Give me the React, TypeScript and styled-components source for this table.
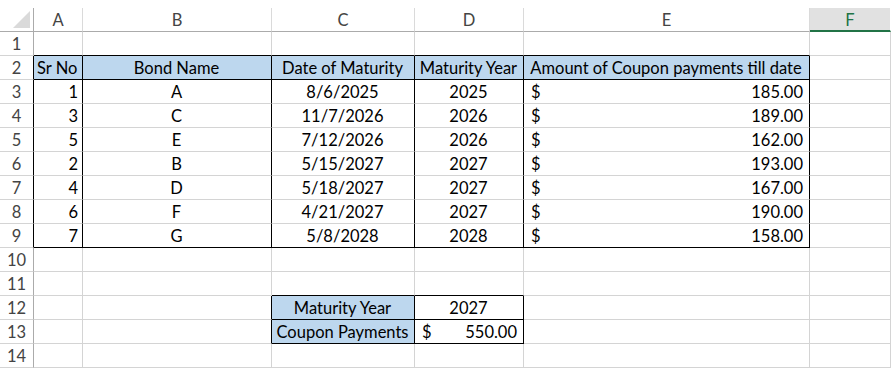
import React from "react";
import styled, { createGlobalStyle } from "styled-components";

const Global = createGlobalStyle`
  html, body { margin: 0; padding: 0; background: #fff; }
  body { font-family: "Lato", "Liberation Sans", sans-serif; }
`;

const COLS = [34, 49, 189, 143, 109, 286, 81];
const GRID = "#d4d4d4";
const BLACK = "#000";
const BLUE = "#bdd7ee";

const Sheet = styled.div`
  padding-top: 8px;
  width: 892px;
  height: 369px;
  overflow: hidden;
  box-sizing: border-box;
`;

const Grid = styled.div`
  display: grid;
  grid-template-columns: ${COLS.map((c) => c + "px").join(" ")};
  grid-auto-rows: 24px;
`;

const Corner = styled.div`
  position: relative;
  border-right: 1px solid #ababab;
  border-bottom: 1px solid #ababab;
  box-sizing: border-box;
`;

const Tri = styled.svg`
  position: absolute;
  right: 3px;
  bottom: 3px;
`;

const ColHead = styled.div<{ $active?: boolean }>`
  box-sizing: border-box;
  display: flex;
  align-items: center;
  justify-content: center;
  font-size: 16.5px;
  color: ${(p) => (p.$active ? "#217346" : "#444")};
  background: ${(p) => (p.$active ? "#e1e1e1" : "#fff")};
  border-right: 1px solid ${(p) => (p.$active ? "#fff" : "#dadada")};
  border-bottom: ${(p) => (p.$active ? "2px solid #217346" : "1px solid #ababab")};
  padding-top: 1px;
`;

const RowHead = styled.div<{ $right: string }>`
  box-sizing: border-box;
  display: flex;
  align-items: center;
  justify-content: center;
  font-size: 16.5px;
  color: #444;
  border-right: 1px solid ${(p) => p.$right};
  border-bottom: 1px solid ${GRID};
  padding-top: 1px;
`;

const Cell = styled.div<{
  $right: string;
  $bottom: string;
  $bg: string;
  $align: "left" | "center" | "right" | "acct";
}>`
  box-sizing: border-box;
  display: flex;
  align-items: center;
  justify-content: ${(p) =>
    p.$align === "center" ? "center" : p.$align === "right" ? "flex-end" : p.$align === "acct" ? "space-between" : "flex-start"};
  background: ${(p) => p.$bg};
  border-right: 1px solid ${(p) => p.$right};
  border-bottom: 1px solid ${(p) => p.$bottom};
  padding: 1px 4px 0 3px;
  font-size: 16.5px;
  color: #000;
  white-space: nowrap;
  overflow: visible;
`;

const Dollar = styled.span`
  padding-left: 4px;
`;

const Amount = styled.span`
  padding-right: 2px;
`;

type Val = { text: string; align: "left" | "center" | "right" | "acct" } | null;

const bonds = [
  ["1", "A", "8/6/2025", "2025", "185.00"],
  ["3", "C", "11/7/2026", "2026", "189.00"],
  ["5", "E", "7/12/2026", "2026", "162.00"],
  ["2", "B", "5/15/2027", "2027", "193.00"],
  ["4", "D", "5/18/2027", "2027", "167.00"],
  ["6", "F", "4/21/2027", "2027", "190.00"],
  ["7", "G", "5/8/2028", "2028", "158.00"],
];

function value(r: number, c: number): Val {
  if (r === 2) {
    const h = ["Sr No", "Bond Name", "Date of Maturity", "Maturity Year", "Amount of Coupon payments till date"];
    if (c < 5) return { text: h[c], align: c === 0 ? "left" : "center" };
  }
  if (r >= 3 && r <= 9) {
    const b = bonds[r - 3];
    if (c === 0) return { text: b[0], align: "right" };
    if (c >= 1 && c <= 3) return { text: b[c], align: "center" };
    if (c === 4) return { text: b[4], align: "acct" };
  }
  if (r === 12) {
    if (c === 2) return { text: "Maturity Year", align: "center" };
    if (c === 3) return { text: "2027", align: "center" };
  }
  if (r === 13) {
    if (c === 2) return { text: "Coupon Payments", align: "center" };
    if (c === 3) return { text: "550.00", align: "acct" };
  }
  return null;
}

const inMain = (r: number, c: number) => r >= 2 && r <= 9 && c >= 0 && c <= 4;
const inSmall = (r: number, c: number) => r >= 12 && r <= 13 && c >= 2 && c <= 3;
const inTable = (r: number, c: number) => inMain(r, c) || inSmall(r, c);

function rightBlack(r: number, c: number) {
  return inTable(r, c) || inTable(r, c + 1);
}
function bottomBlack(r: number, c: number) {
  if (inMain(r, c) || inMain(r + 1, c)) {
    if (r === 1 || r === 2 || r === 9) return true;
  }
  if (inSmall(r, c) || inSmall(r + 1, c)) return true;
  return false;
}

function isBlue(r: number, c: number) {
  return (r === 2 && c <= 4) || ((r === 12 || r === 13) && c === 2);
}

export default function App() {
  const letters = ["A", "B", "C", "D", "E", "F"];
  const rows = Array.from({ length: 14 }, (_, i) => i + 1);
  return (
    <>
      <Global />
      <Sheet>
        <Grid>
          <Corner>
            <Tri width="17" height="17" viewBox="0 0 17 17">
              <polygon points="17,0 17,17 0,17" fill="#dadada" />
            </Tri>
          </Corner>
          {letters.map((l) => (
            <ColHead key={l} $active={l === "F"}>
              {l}
            </ColHead>
          ))}
          {rows.map((r) => (
            <React.Fragment key={r}>
              <RowHead $right={inTable(r, 0) ? BLACK : "#ababab"}>{r}</RowHead>
              {letters.map((_, c) => {
                const v = value(r, c);
                return (
                  <Cell
                    key={c}
                    $right={rightBlack(r, c) ? BLACK : GRID}
                    $bottom={bottomBlack(r, c) ? BLACK : GRID}
                    $bg={isBlue(r, c) ? BLUE : "#fff"}
                    $align={v ? v.align : "left"}
                  >
                    {v && v.align === "acct" ? (
                      <>
                        <Dollar>$</Dollar>
                        <Amount>{v.text}</Amount>
                      </>
                    ) : (
                      v?.text
                    )}
                  </Cell>
                );
              })}
            </React.Fragment>
          ))}
        </Grid>
      </Sheet>
    </>
  );
}
